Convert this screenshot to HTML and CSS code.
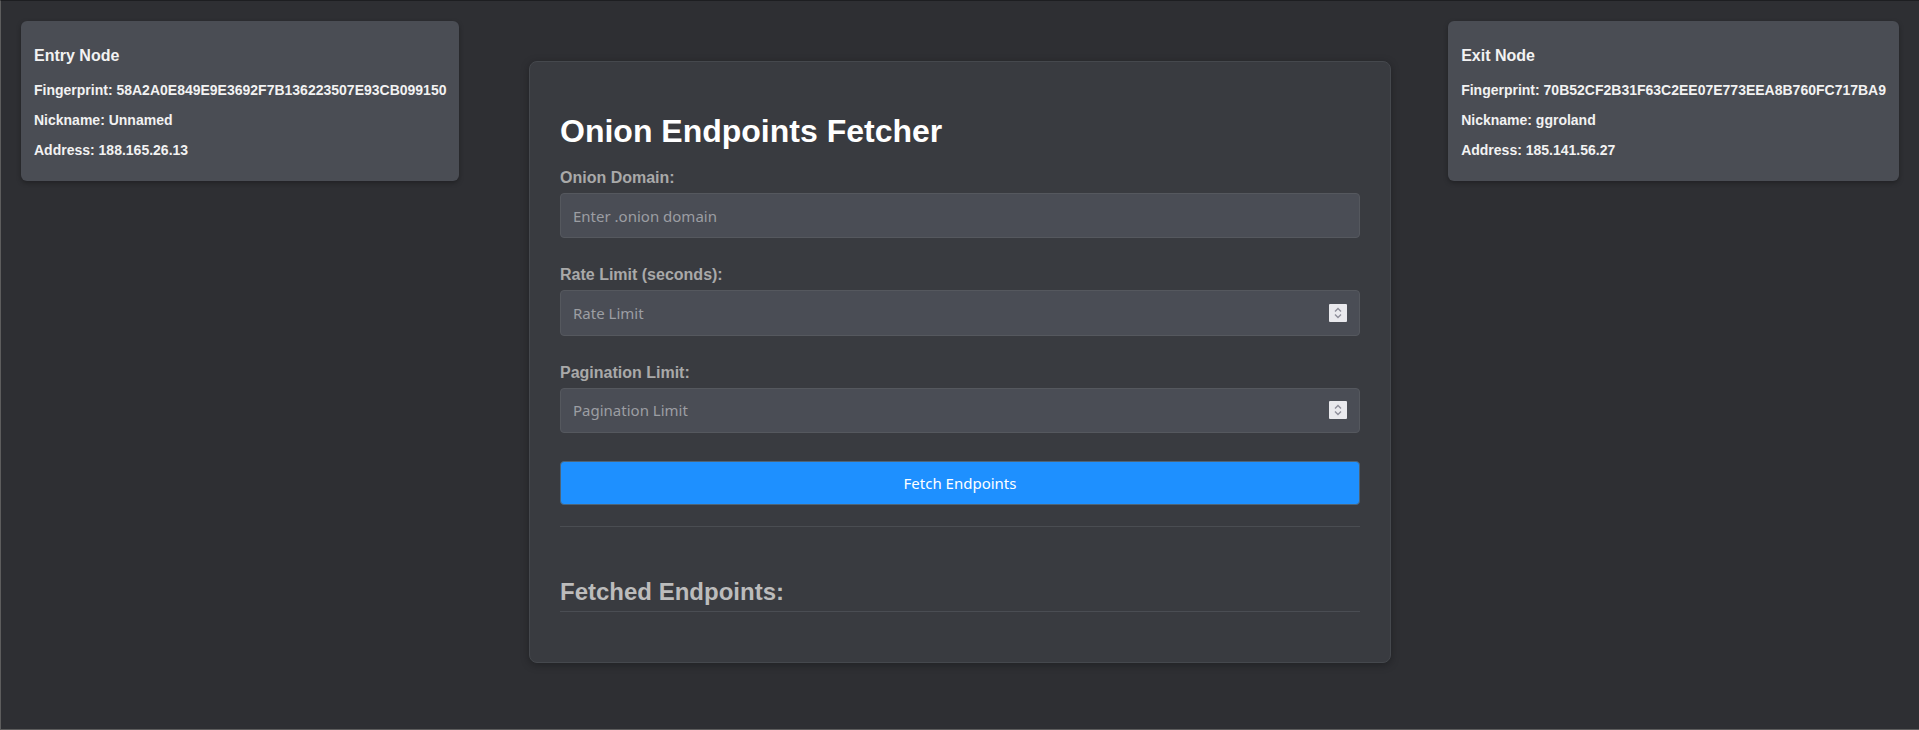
FILE: index.html
```html
<!DOCTYPE html>
<html lang="en">
<head>
<meta charset="utf-8">
<title>Onion Endpoints Fetcher</title>
<link rel="stylesheet" href="styles.css">
</head>
<body>
<div class="layout">
  <div class="node-card node-entry">
    <h3 class="node-title">Entry Node</h3>
    <p class="node-line">Fingerprint: 58A2A0E849E9E3692F7B136223507E93CB099150</p>
    <p class="node-line">Nickname: Unnamed</p>
    <p class="node-line">Address: 188.165.26.13</p>
  </div>

  <main class="main-card">
    <h1 class="main-title">Onion Endpoints Fetcher</h1>
    <div class="form-group">
      <label class="field-label" for="domain">Onion Domain:</label>
      <div class="field-wrap">
        <input class="field" id="domain" type="text" placeholder="Enter .onion domain">
      </div>
    </div>
    <div class="form-group">
      <label class="field-label" for="rate">Rate Limit (seconds):</label>
      <div class="field-wrap">
        <input class="field" id="rate" type="number" placeholder="Rate Limit">
        <span class="spinner"><svg width="18" height="18" viewBox="0 0 18 18"><path d="M6 7.5 L9 4.5 L12 7.5 M6 10.5 L9 13.5 L12 10.5" fill="none" stroke="#8e8e9a" stroke-width="1.4"/></svg></span>
      </div>
    </div>
    <div class="form-group">
      <label class="field-label" for="pages">Pagination Limit:</label>
      <div class="field-wrap">
        <input class="field" id="pages" type="number" placeholder="Pagination Limit">
        <span class="spinner"><svg width="18" height="18" viewBox="0 0 18 18"><path d="M6 7.5 L9 4.5 L12 7.5 M6 10.5 L9 13.5 L12 10.5" fill="none" stroke="#8e8e9a" stroke-width="1.4"/></svg></span>
      </div>
    </div>
    <button class="fetch-btn" type="button">Fetch Endpoints</button>
    <hr class="divider">
    <h2 class="results-title">Fetched Endpoints:</h2>
    <div class="results"></div>
  </main>

  <div class="node-card node-exit">
    <h3 class="node-title">Exit Node</h3>
    <p class="node-line">Fingerprint: 70B52CF2B31F63C2EE07E773EEA8B760FC717BA9</p>
    <p class="node-line">Nickname: ggroland</p>
    <p class="node-line">Address: 185.141.56.27</p>
  </div>
</div>
</body>
</html>
```

FILE: styles.css
```css
html {
  background: #2e2f33;
}

body {
  margin: 0;
  height: 730px;
  box-sizing: border-box;
  background: #2e2f33;
  border-top: 1px solid #1d1e21;
  border-left: 1px solid #5d5d5d;
  border-bottom: 1px solid #5d5d5d;
  font-family: "Liberation Sans", Arial, sans-serif;
  color: #f0f0f0;
  overflow: hidden;
}

.layout {
  display: grid;
  grid-template-columns: 1fr auto 1fr;
  align-items: start;
  padding: 20px 20px 0 20px;
}

.node-card {
  background: #4a4d54;
  border-radius: 6px;
  padding: 8px 13px 9px;
  box-shadow: 0 2px 5px rgba(0, 0, 0, 0.3);
  white-space: nowrap;
}

.node-entry {
  justify-self: start;
}

.node-exit {
  justify-self: end;
}

.node-title {
  font-size: 16px;
  font-weight: bold;
  margin: 18px 0 17px;
  color: #f2f2f2;
}

.node-line {
  font-size: 14px;
  font-weight: bold;
  margin: 14px 0;
  color: #f2f2f2;
}

.main-card {
  margin-top: 40px;
  width: 800px;
  padding: 30px;
  background: #393b40;
  border: 1px solid #45484d;
  border-radius: 8px;
  box-shadow: 0 2px 8px rgba(0, 0, 0, 0.3);
}

.main-title {
  font-size: 32px;
  font-weight: bold;
  margin: 21px 0 19px;
  color: #ffffff;
}

.form-group {
  margin-bottom: 28px;
}

.field-label {
  display: block;
  font-size: 16px;
  font-weight: bold;
  color: #a9a9a9;
  margin-bottom: 6px;
}

.field-wrap {
  position: relative;
}

.field {
  display: block;
  width: 100%;
  height: 45.4px;
  box-sizing: border-box;
  padding: 0 12px;
  background: #4a4d55;
  border: 1px solid #55585e;
  border-radius: 4px;
  color: #e0e0e0;
  font-family: "Noto Sans", sans-serif;
  font-size: 15px;
  outline: none;
  -moz-appearance: textfield;
}

.field::placeholder {
  color: #9c9ea3;
}

.field::-webkit-inner-spin-button,
.field::-webkit-outer-spin-button {
  -webkit-appearance: none;
  margin: 0;
}

.spinner {
  position: absolute;
  right: 13px;
  top: 50%;
  width: 18px;
  height: 18px;
  margin-top: -9px;
  background: #e9e9ed;
  border-radius: 1px;
  display: flex;
}

.fetch-btn {
  display: block;
  width: 100%;
  height: 44px;
  background: #1e90ff;
  border: 1px solid #4d6478;
  border-radius: 4px;
  color: #ffffff;
  font-family: "Noto Sans", sans-serif;
  font-size: 15px;
  cursor: pointer;
}

.divider {
  border: none;
  border-top: 1px solid #4a4d52;
  margin: 21px 0 0;
  height: 0;
}

.results-title {
  font-size: 24px;
  font-weight: bold;
  color: #bcbcbc;
  margin: 51px 0 20px;
  padding-bottom: 5px;
  border-bottom: 1px solid #4a4d53;
}

.results {
  min-height: 0;
}
```
